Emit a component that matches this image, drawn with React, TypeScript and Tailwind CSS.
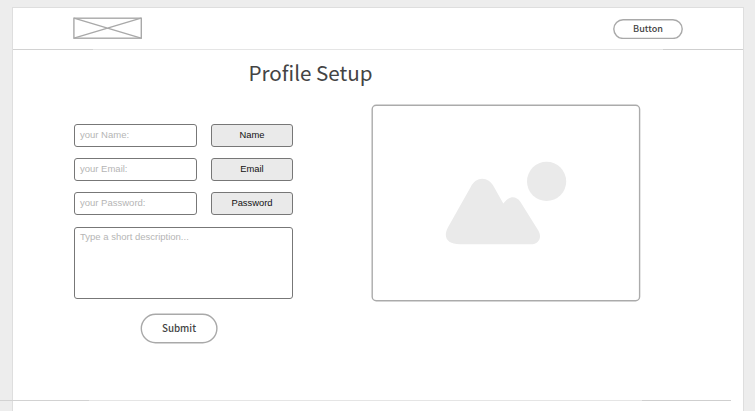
const fields = [
  { label: "Name", hint: "your Name:" },
  { label: "Email", hint: "your Email:" },
  { label: "Password", hint: "your Password:" },
];

function Rule({ className, end }: { className: string; end: string }) {
  return (
    <div className={`flex h-px shrink-0 ${className}`}>
      <div className={`${end} bg-[#d2d2d2]`} />
      <div className="flex-1 bg-[#e5e5e5]" />
      <div className={`${end} bg-[#cfcfcf]`} />
    </div>
  );
}

function Logo() {
  return (
    <svg width="70" height="23" viewBox="0 0 70 23" fill="none" stroke="#a9a9a9">
      <path d="M1 1.200 68 21.200M68 1.200 1 21.200" strokeWidth="1.400" />
      <rect x="0.900" y="1.200" width="67.400" height="20" strokeWidth="1.400" />
    </svg>
  );
}

function Picture() {
  return (
    <svg width="270" height="198" viewBox="371 104 270 198">
      <rect x="372.200" y="105.300" width="267.400" height="195.400" rx="4" fill="#fff" stroke="#ababab" strokeWidth="1.400" />
      <g fill="#eaeaea">
        <circle cx="546.600" cy="181.400" r="19.600" />
        <path d="M448.300 226.700 470.700 187C476 176 488.500 176 494 187L503.300 203.500 506.500 200C511 196 516.500 196.200 520.500 202L538.300 230.500C542.500 237.500 538.500 244.200 531 244.200H460C447 244.200 442.500 237 448.300 226.700Z" />
      </g>
    </svg>
  );
}

export default function App() {
  return (
    <div className="h-[411px] w-[755px] overflow-hidden bg-[#ededed] pl-3 pt-[7px] font-['Noto_Sans_CJK_SC',sans-serif]">
      <div className="flex h-[420px] w-[732px] flex-col border border-[#dedede] bg-white">
        <header className="flex h-[41px] shrink-0 items-start justify-between pl-[60px] pr-[60px] pt-[9px]">
          <Logo />
          <button className="mt-[2px] flex h-[20px] w-[70px] items-center justify-center">
            <svg className="absolute" width="70" height="20" fill="none">
              <rect x="0.800" y="0.800" width="68.400" height="18.600" rx="9.300" stroke="#a9a9a9" strokeWidth="1.400" />
            </svg>
            <span className="text-[9.100px] font-medium leading-none text-[#444]">Button</span>
          </button>
        </header>
        <Rule className="w-full" end="w-20" />
        <main className="flex h-[350px] shrink-0 flex-col">
          <h1 className="ml-[235.500px] mt-[7px] h-8 whitespace-nowrap text-[20.600px] leading-[31px] text-[#444]">Profile Setup</h1>
          <div className="flex items-start pl-[61px] pt-[15px]">
            <form className="mt-[20px] flex w-[219px] flex-col font-['Liberation_Sans',sans-serif] text-[9.500px]">
              {fields.map((f) => (
                <div key={f.label} className="mb-[11px] flex justify-between">
                  <div className="flex h-[23px] w-[123px] items-center rounded-[3px] border border-[#777] pl-[5px] text-[#b5b5b5]">{f.hint}</div>
                  <div className="flex h-[23px] w-[82px] items-center justify-center rounded-[3px] border border-[#777] bg-[#eaeaea] text-[9.400px] text-[#111]">{f.label}</div>
                </div>
              ))}
              <div className="mt-px h-[72px] rounded-[3px] border border-[#777] pl-[5px] pt-[2px] leading-[13px] text-[#b5b5b5]">Type a short description...</div>
              <button type="button" className="ml-[66px] mt-[14px] flex h-[31px] w-[78px] items-center justify-center font-['Noto_Sans_CJK_SC',sans-serif]">
                <svg className="absolute" width="78" height="31" fill="none">
                  <rect x="1.300" y="1.300" width="75.600" height="28.400" rx="14.200" stroke="#a9a9a9" strokeWidth="1.400" />
                </svg>
                <span className="text-[9.800px] font-medium leading-none text-[#444]">Submit</span>
              </button>
            </form>
            <div className="ml-[78px]"><Picture /></div>
          </div>
        </main>
        <Rule className="-ml-[13px] w-[731px]" end="w-[89px]" />
      </div>
    </div>
  );
}
